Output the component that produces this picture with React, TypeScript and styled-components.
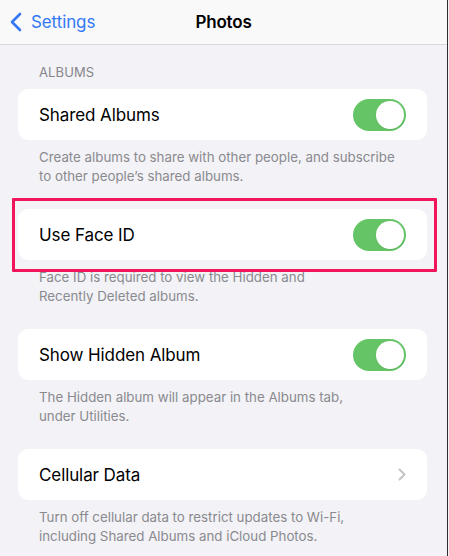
import React from "react";
import styled, { createGlobalStyle } from "styled-components";

const Global = createGlobalStyle`
  html, body { margin: 0; padding: 0; background: #f2f2f7; }
  body { font-family: Inter, "Noto Sans", "Liberation Sans", sans-serif; -webkit-font-smoothing: antialiased; }
  * { box-sizing: border-box; }
`;

const Page = styled.div`
  width: 448px;
  height: 556px;
  background: #f2f2f7;
  border-right: 1px solid #2e2e30;
  display: flex;
  flex-direction: column;
  overflow: hidden;
`;

const NavBar = styled.div`
  position: relative;
  height: 45px;
  flex: none;
  background: #f9f9f9;
  border-bottom: 1px solid #d8d8dc;
  display: flex;
  align-items: center;
  justify-content: center;
`;

const BackButton = styled.div`
  position: absolute;
  left: 9px;
  top: 0;
  height: 44px;
  display: flex;
  align-items: center;
  gap: 9px;
  color: #3478f6;
  font-size: 17px;
  letter-spacing: -0.1px;
`;

const Title = styled.div`
  font-size: 17px;
  font-weight: 600;
  color: #000;
  letter-spacing: -0.2px;
`;

const Content = styled.div`
  display: flex;
  flex-direction: column;
  padding: 19px 20px 0 18px;
`;

const SectionHeader = styled.div`
  font-size: 13px;
  line-height: 16px;
  color: #86868b;
  padding-left: 21px;
  margin-bottom: 9px;
  letter-spacing: 0.1px;
`;

const Section = styled.div`
  position: relative;
  display: flex;
  flex-direction: column;
  margin-bottom: 24px;
`;

const Card = styled.div`
  height: 51px;
  background: #ffffff;
  border-radius: 10px;
  display: flex;
  align-items: center;
  justify-content: space-between;
  padding: 0 21px 0 21px;
`;

const Label = styled.div`
  font-size: 17px;
  color: #000;
  letter-spacing: -0.1px;
`;

const Footer = styled.div`
  padding: 8px 21px 0 21px;
  font-size: 13.3px;
  line-height: 18.5px;
  color: #8a8a8e;
  letter-spacing: 0px;
  white-space: nowrap;
`;

const Track = styled.div<{ $on: boolean }>`
  width: 53px;
  height: 32px;
  border-radius: 16px;
  background: ${(p) => (p.$on ? "#65c466" : "#e9e9eb")};
  padding: 2px;
  display: flex;
  justify-content: ${(p) => (p.$on ? "flex-end" : "flex-start")};
`;

const Knob = styled.div`
  width: 28px;
  height: 28px;
  border-radius: 50%;
  background: #fff;
  box-shadow: 0 1px 2px rgba(0, 0, 0, 0.08);
`;

const Highlight = styled.div`
  position: absolute;
  left: -6px;
  top: -11px;
  width: 425px;
  height: 74px;
  border: 3px solid #f2155c;
  border-radius: 1px;
  pointer-events: none;
`;

const Toggle = ({ on }: { on: boolean }) => (
  <Track $on={on}>
    <Knob />
  </Track>
);

const Chevron = () => (
  <svg width="8" height="13" viewBox="0 0 8 13" fill="none">
    <path d="M1.5 1.5 L6.5 6.5 L1.5 11.5" stroke="#c4c4c7" strokeWidth="2" strokeLinecap="round" strokeLinejoin="round" />
  </svg>
);

const BackChevron = () => (
  <svg width="13" height="20" viewBox="0 0 13 20" fill="none">
    <path d="M11 2 L3 10 L11 18" stroke="#3478f6" strokeWidth="2.6" strokeLinecap="round" strokeLinejoin="round" />
  </svg>
);

export default function App() {
  return (
    <>
      <Global />
      <Page>
        <NavBar>
          <BackButton>
            <BackChevron />
            <span>Settings</span>
          </BackButton>
          <Title>Photos</Title>
        </NavBar>
        <Content>
          <SectionHeader>ALBUMS</SectionHeader>
          <Section>
            <Card>
              <Label>Shared Albums</Label>
              <Toggle on />
            </Card>
            <Footer>
              Create albums to share with other people, and subscribe
              <br />
              to other people’s shared albums.
            </Footer>
          </Section>
          <Section>
            <Card>
              <Label>Use Face ID</Label>
              <Toggle on />
            </Card>
            <Footer>
              Face ID is required to view the Hidden and
              <br />
              Recently Deleted albums.
            </Footer>
            <Highlight />
          </Section>
          <Section>
            <Card>
              <Label>Show Hidden Album</Label>
              <Toggle on />
            </Card>
            <Footer>
              The Hidden album will appear in the Albums tab,
              <br />
              under Utilities.
            </Footer>
          </Section>
          <Section>
            <Card>
              <Label>Cellular Data</Label>
              <Chevron />
            </Card>
            <Footer>
              Turn off cellular data to restrict updates to Wi-Fi,
              <br />
              including Shared Albums and iCloud Photos.
            </Footer>
          </Section>
        </Content>
      </Page>
    </>
  );
}
